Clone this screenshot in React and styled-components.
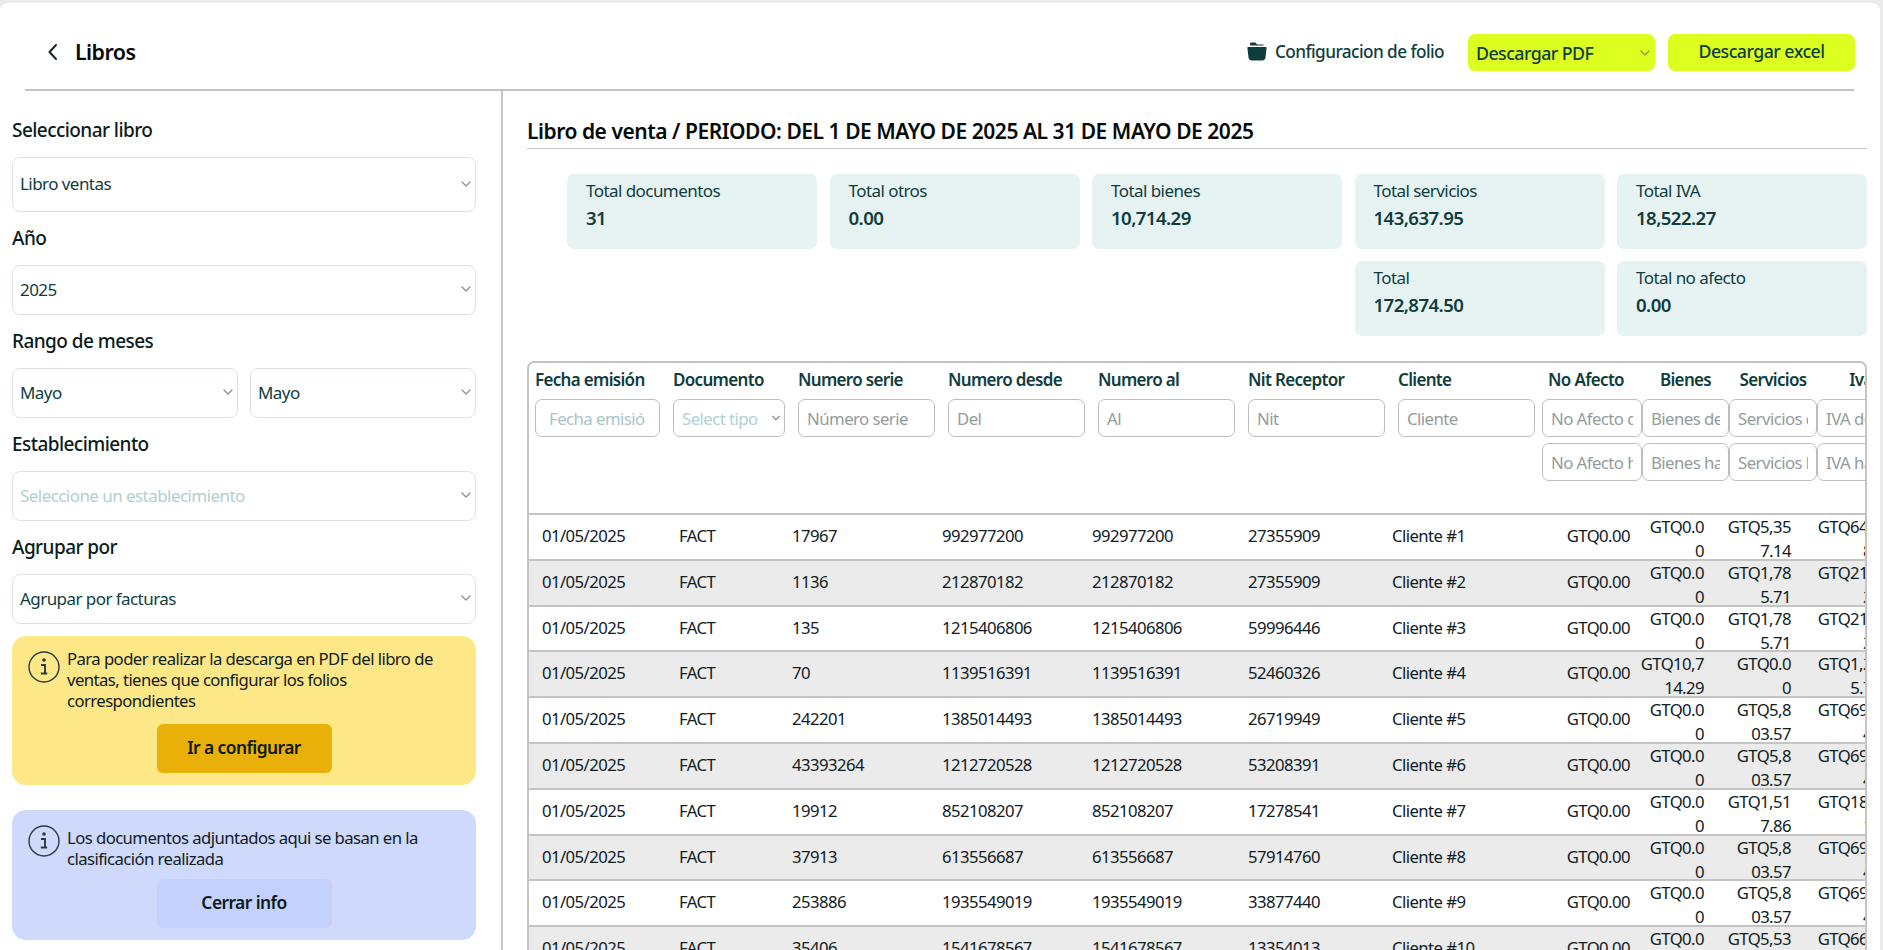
import React from "react";
import styled, { createGlobalStyle } from "styled-components";

const FONT = `"Noto Sans", "Open Sans", sans-serif`;
const TEAL = "#0f3d3e";

const Global = createGlobalStyle`
  html, body { margin: 0; padding: 0; height: 950px; overflow: hidden; background: #ebebeb; }
  * { box-sizing: border-box; }
  body { font-family: ${FONT}; letter-spacing: -0.035em; }
`;

const Page = styled.div`
  width: 1880px;
  height: 947px;
  margin-top: 3px;
  background: #fff;
  border-radius: 8px 8px 0 0;
  overflow: hidden;
  display: flex;
  flex-direction: column;
`;
const Header = styled.header`
  height: 88px;
  flex: none;
  margin: 0 26px 0 25px;
  border-bottom: 2px solid #c4c4c4;
  display: flex;
  align-items: center;
  justify-content: space-between;
  padding-top: 13px;
`;
const Title = styled.h1`
  margin: 0;
  font-size: 21.4px;
  font-weight: 600;
  color: #050a0a;
  display: flex;
  align-items: center;
  gap: 17px;
  padding-left: 22px;
  padding-bottom: 2px;
`;
const Actions = styled.div`
  display: flex;
  align-items: center;
  margin-right: -1px;
`;
const FolioLink = styled.a`
  display: flex;
  align-items: center;
  gap: 8px;
  font-size: 17.2px;
  font-weight: 500;
  color: ${TEAL};
  margin-right: 24px;
  margin-top: -3px;
`;
const LimeBase = styled.div`
  width: 187px;
  height: 37px;
  background: #ddff1f;
  border-radius: 7px;
  color: ${TEAL};
  font-size: 17.8px;
  font-weight: 500;
  display: flex;
  align-items: center;
`;
const LimeSelect = styled(LimeBase)`
  padding: 1px 3px 0 8px;
  justify-content: space-between;
  margin-right: 13px;
`;
const LimeButton = styled(LimeBase)`
  justify-content: center;
  padding-bottom: 4px;
`;
const Body = styled.div`
  flex: 1;
  display: flex;
  min-height: 0;
`;
const Sidebar = styled.aside`
  width: 503px;
  flex: none;
  border-right: 2px solid #c4c4c4;
  padding: 13px 25px 0 12px;
`;
const Label = styled.div`
  height: 53px;
  display: flex;
  align-items: center;
  padding-bottom: 2px;
  font-size: 19px;
  font-weight: 500;
  color: #0a1c1c;
`;
const SelectBox = styled.div`
  height: ${(p) => p.$h || 50}px;
  flex: 1;
  border: 1.5px solid #dbe3e3;
  border-radius: 8px;
  display: flex;
  align-items: center;
  justify-content: space-between;
  padding: 0 2px 2px 7px;
  font-size: 17px;
  color: ${(p) => (p.$placeholder ? "#afd0d0" : TEAL)};
`;
const MonthRow = styled.div`
  display: flex;
  gap: 12px;
`;
const Notice = styled.section`
  background: ${(p) => p.$bg};
  border-radius: 14px;
  height: ${(p) => p.$h}px;
  margin-top: ${(p) => p.$mt}px;
  padding: 13px 16px 0;
`;
const NoticeBody = styled.div`
  display: flex;
  gap: 7px;
  font-size: 16.7px;
  line-height: 20.8px;
  color: #10201f;
  min-height: ${(p) => p.$mh}px;
`;
const NoticeText = styled.div`
  padding-top: ${(p) => p.$top || 0}px;
`;
const NoticeIcon = styled.svg`
  flex: none;
  margin-top: 2px;
`;
const NoticeButton = styled.div`
  width: 175px;
  height: 49px;
  margin: 0 auto;
  background: ${(p) => p.$bg};
  border-radius: 6px;
  display: flex;
  align-items: center;
  justify-content: center;
  font-size: 17.4px;
  font-weight: 600;
  color: #0c1a1a;
  padding-bottom: 3px;
`;
const Main = styled.main`
  flex: 1;
  min-width: 0;
  padding: 0 13px 0 24px;
`;
const Period = styled.h2`
  margin: 0;
  height: 58px;
  border-bottom: 1.5px solid #c4c4c4;
  font-size: 21px;
  font-weight: 600;
  letter-spacing: -0.022em;
  color: #050a0a;
  display: flex;
  align-items: center;
  padding-top: 22px;
`;
const Stats = styled.div`
  display: grid;
  grid-template-columns: repeat(5, 250px);
  column-gap: 12.5px;
  row-gap: 12px;
  margin: 25px 0 0 40px;
`;
const Stat = styled.div`
  height: 75px;
  background: #e7f2f2;
  border-radius: 7px;
  padding: 5px 19px;
  grid-column: ${(p) => p.$col || "auto"};
  color: ${TEAL};
`;
const StatLabel = styled.div`
  font-size: 17px;
  line-height: 24px;
`;
const StatValue = styled.div`
  font-size: 18.6px;
  font-weight: 600;
  line-height: 29px;
`;
const TableBox = styled.div`
  margin-top: 25px;
  border: 2px solid #c4c4c4;
  border-bottom: none;
  border-radius: 7px 7px 0 0;
  height: 700px;
  overflow: hidden;
`;
const HeadGrid = styled.div`
  width: 1420px;
  height: 152px;
  border-bottom: 2px solid #c4c4c4;
  padding: 0 0 0 6px;
  display: grid;
  grid-template-columns: 138px 125px 150px 150px 150px 150px 144px 100px 87px 88px 88px;
`;
const HeadCol = styled.div`
  display: flex;
  flex-direction: column;
  padding-right: ${(p) => p.$pr}px;
`;
const HeadTitle = styled.div`
  height: 36px;
  display: flex;
  align-items: center;
  justify-content: ${(p) => (p.$center ? "center" : "flex-start")};
  padding: 0 ${(p) => p.$shift || 0}px 3px 0;
  font-size: 17px;
  font-weight: 600;
  color: ${TEAL};
  white-space: nowrap;
  letter-spacing: -0.04em;
`;
const FilterBox = styled.div`
  height: 38px;
  flex: none;
  margin-bottom: 6px;
  border: 1.5px solid #bdbdbd;
  border-radius: 7px;
  padding: 0 ${(p) => p.$padR || 8}px 0 ${(p) => p.$padL || 8}px;
  display: flex;
  align-items: center;
  justify-content: space-between;
  font-size: 16.8px;
  color: ${(p) => p.$color || "#949c9c"};
  overflow: hidden;
  white-space: nowrap;
`;
const FilterText = styled.span`
  overflow: hidden;
  flex: 1;
`;
const Row = styled.div`
  width: 1420px;
  height: 45.8px;
  border-bottom: 2px solid #c4c4c4;
  background: ${(p) => (p.$alt ? "#ebebeb" : "#fff")};
  padding-left: 1px;
  display: grid;
  grid-template-columns: 137px 113px 150px 150px 156px 144px 155px 95px 74px 87px 90px;
  font-size: 16.7px;
  color: #10201f;
  overflow: hidden;
`;
const Cell = styled.div`
  display: flex;
  align-items: center;
  padding-left: 12px;
  padding-bottom: 7px;
  white-space: nowrap;
`;
const MoneyCell = styled(Cell)`
  justify-content: flex-end;
  padding-left: 0;
`;
const WrapCell = styled.div`
  line-height: 24px;
  text-align: right;
  white-space: nowrap;
  display: flex;
  flex-direction: column;
`;

const Chevron = ({ color = "#8a9696", size = 14 }) => (
  <svg width={size} height={size} viewBox="0 0 14 14" fill="none" style={{ flex: "none" }}>
    <path d="M3 5l4 4 4-4" stroke={color} strokeWidth="1.4" strokeLinecap="round" strokeLinejoin="round" />
  </svg>
);
const Back = () => (
  <svg width="11" height="18" viewBox="0 0 11 18" fill="none">
    <path d="M9 2L2.5 9 9 16" stroke="#1a2424" strokeWidth="2" strokeLinecap="round" strokeLinejoin="round" />
  </svg>
);
const FolderIcon = () => (
  <svg width="20" height="19" viewBox="0 0 20 19">
    <path fill="#0f3d3e" d="M3 2C3 1 3.600 .5 4.500 .5h4l1.600 1.900h5.400c.7 0 1.200.5 1.300 1.200H3z" />
    <path fill="#0f3d3e" d="M1.300 5h17.400c.6 0 1 .5.9 1.100l-1.100 9.400c-.2 1.900-1.600 3-3.300 3H4.800c-1.700 0-3.100-1.100-3.300-3L.4 6.100C.3 5.500.7 5 1.300 5z" />
  </svg>
);
const InfoIcon = () => (
  <NoticeIcon width="32" height="32" viewBox="0 0 32 32" fill="none">
    <circle cx="16" cy="16" r="15" stroke="#2a3a44" strokeWidth="1.4" />
    <circle cx="16" cy="9" r="1.8" fill="#2a3a44" />
    <path d="M13 14h4v8.500h2.200M12.800 22.500h4.500" stroke="#2a3a44" strokeWidth="1.900" fill="none" />
  </NoticeIcon>
);

const stats = [
  ["Total documentos", "31"],
  ["Total otros", "0.00"],
  ["Total bienes", "10,714.29"],
  ["Total servicios", "143,637.95"],
  ["Total IVA", "18,522.27"],
  ["Total", "172,874.50", "4"],
  ["Total no afecto", "0.00", "5"],
];

const Z = ["GTQ0.0", "0"];
const r57 = ["GTQ1,78", "5.71"];
const i57 = ["GTQ214.", "29"];
const s80 = ["GTQ5,8", "03.57"];
const i80 = ["GTQ696.", "43"];
const rows = [
  ["17967", "992977200", "27355909", Z, ["GTQ5,35", "7.14"], ["GTQ642.", "86"]],
  ["1136", "212870182", "27355909", Z, r57, i57],
  ["135", "1215406806", "59996446", Z, r57, i57],
  ["70", "1139516391", "52460326", ["GTQ10,7", "14.29"], Z, ["GTQ1,28", "5.71"]],
  ["242201", "1385014493", "26719949", Z, s80, i80],
  ["43393264", "1212720528", "53208391", Z, s80, i80],
  ["19912", "852108207", "17278541", Z, ["GTQ1,51", "7.86"], ["GTQ182.", "14"]],
  ["37913", "613556687", "57914760", Z, s80, i80],
  ["253886", "1935549019", "33877440", Z, s80, i80],
  ["35406", "1541678567", "13354013", Z, ["GTQ5,53", "5.71"], ["GTQ664.", "29"]],
];

const plainCols = [
  { t: "Fecha emisión", ph: "Fecha emisión", color: "#abc4c6", padL: 13, padR: 13, pr: 13 },
  { t: "Documento", ph: "Select tipo", color: "#afd0d6", sel: true, pr: 13, padR: 2 },
  { t: "Numero serie", ph: "Número serie", pr: 13 },
  { t: "Numero desde", ph: "Del", pr: 13 },
  { t: "Numero al", ph: "Al", pr: 13 },
  { t: "Nit Receptor", ph: "Nit", pr: 13 },
  { t: "Cliente", ph: "Cliente", pr: 7 },
];
const rangeCols = [
  ["No Afecto", "No Afecto d", "No Afecto h", 12],
  ["Bienes", "Bienes des", "Bienes has", 0],
  ["Servicios", "Servicios de", "Servicios h", 0],
  ["Iva", "IVA desde", "IVA hasta", 0],
];

const Wrap = ({ lines }) => (
  <WrapCell>
    {lines.map((l) => (
      <span key={l}>{l}</span>
    ))}
  </WrapCell>
);

export default function App() {
  return (
    <Page>
      <Global />
      <Header>
        <Title>
          <Back />
          Libros
        </Title>
        <Actions>
          <FolioLink>
            <FolderIcon />
            Configuracion de folio
          </FolioLink>
          <LimeSelect>
            Descargar PDF
            <Chevron color="#8a9a40" />
          </LimeSelect>
          <LimeButton>Descargar excel</LimeButton>
        </Actions>
      </Header>
      <Body>
        <Sidebar>
          <Label>Seleccionar libro</Label>
          <SelectBox $h={55}>
            Libro ventas
            <Chevron />
          </SelectBox>
          <Label>Año</Label>
          <SelectBox>
            2025
            <Chevron />
          </SelectBox>
          <Label>Rango de meses</Label>
          <MonthRow>
            <SelectBox>
              Mayo
              <Chevron />
            </SelectBox>
            <SelectBox>
              Mayo
              <Chevron />
            </SelectBox>
          </MonthRow>
          <Label>Establecimiento</Label>
          <SelectBox $placeholder>
            Seleccione un establecimiento
            <Chevron />
          </SelectBox>
          <Label>Agrupar por</Label>
          <SelectBox>
            Agrupar por facturas
            <Chevron />
          </SelectBox>
          <Notice $bg="#fee787" $h={149} $mt={12}>
            <NoticeBody $mh={75}>
              <InfoIcon />
              <NoticeText>Para poder realizar la descarga en PDF del libro de ventas, tienes que configurar los folios correspondientes</NoticeText>
            </NoticeBody>
            <NoticeButton $bg="#e8b008">Ir a configurar</NoticeButton>
          </Notice>
          <Notice $bg="#cfd9fc" $h={130} $mt={25}>
            <NoticeBody $mh={56}>
              <InfoIcon />
              <NoticeText $top={5}>Los documentos adjuntados aqui se basan en la clasificación realizada</NoticeText>
            </NoticeBody>
            <NoticeButton $bg="#c5d1fd">Cerrar info</NoticeButton>
          </Notice>
        </Sidebar>
        <Main>
          <Period>Libro de venta / PERIODO: DEL 1 DE MAYO DE 2025 AL 31 DE MAYO DE 2025</Period>
          <Stats>
            {stats.map(([l, v, c]) => (
              <Stat key={l} $col={c}>
                <StatLabel>{l}</StatLabel>
                <StatValue>{v}</StatValue>
              </Stat>
            ))}
          </Stats>
          <TableBox>
            <HeadGrid>
              {plainCols.map((c) => (
                <HeadCol key={c.t} $pr={c.pr}>
                  <HeadTitle>{c.t}</HeadTitle>
                  <FilterBox $color={c.color} $padL={c.padL} $padR={c.padR}>
                    <FilterText>{c.ph}</FilterText>
                    {c.sel && <Chevron size={12} />}
                  </FilterBox>
                </HeadCol>
              ))}
              {rangeCols.map(([t, a, b, shift]) => (
                <HeadCol key={t} $pr={0}>
                  <HeadTitle $center $shift={shift}>{t}</HeadTitle>
                  <FilterBox>
                    <FilterText>{a}</FilterText>
                  </FilterBox>
                  <FilterBox>
                    <FilterText>{b}</FilterText>
                  </FilterBox>
                </HeadCol>
              ))}
            </HeadGrid>
            {rows.map(([serie, num, nit, bienes, serv, iva], i) => (
              <Row key={i} $alt={i % 2 === 1}>
                <Cell>01/05/2025</Cell>
                <Cell>FACT</Cell>
                <Cell>{serie}</Cell>
                <Cell>{num}</Cell>
                <Cell>{num}</Cell>
                <Cell>{nit}</Cell>
                <Cell>Cliente #{i + 1}</Cell>
                <MoneyCell>GTQ0.00</MoneyCell>
                <Wrap lines={bienes} />
                <Wrap lines={serv} />
                <Wrap lines={iva} />
              </Row>
            ))}
          </TableBox>
        </Main>
      </Body>
    </Page>
  );
}
